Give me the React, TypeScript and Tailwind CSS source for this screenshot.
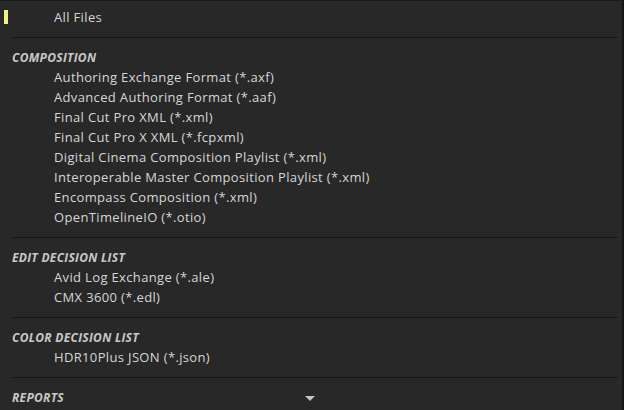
import React from 'react';

const sections = [
  {
    title: 'COMPOSITION',
    items: [
      'Authoring Exchange Format (*.axf)',
      'Advanced Authoring Format (*.aaf)',
      'Final Cut Pro XML (*.xml)',
      'Final Cut Pro X XML (*.fcpxml)',
      'Digital Cinema Composition Playlist (*.xml)',
      'Interoperable Master Composition Playlist (*.xml)',
      'Encompass Composition (*.xml)',
      'OpenTimelineIO (*.otio)',
    ],
  },
  {
    title: 'EDIT DECISION LIST',
    items: ['Avid Log Exchange (*.ale)', 'CMX 3600 (*.edl)'],
  },
  {
    title: 'COLOR DECISION LIST',
    items: ['HDR10Plus JSON (*.json)'],
  },
];

const Divider = () => (
  <div className="h-5 pt-[9px] pl-3 pr-[4px]">
    <div className="h-px w-full bg-[#161616]" />
  </div>
);

const Item = ({ label }: { label: string }) => (
  <div className="h-5 flex items-center pl-[54px] text-[13px] tracking-[0.35px] text-[#d6d6d6] whitespace-nowrap">{label}</div>
);

const Header = ({ title }: { title: string }) => (
  <div className="h-5 flex items-center pl-3 text-[12px] tracking-[0.3px] font-bold italic text-[#c8c8c8] whitespace-nowrap">{title}</div>
);

export default function App() {
  return (
    <div
      className="w-[624px] h-[410px] overflow-hidden bg-[#282828] border-t border-t-[#1a1a1a] border-r-2 border-r-[#151515] pt-[7px]"
      style={{ fontFamily: '"Open Sans", "Noto Sans", sans-serif' }}
    >
      <div className="relative">
        <div className="absolute left-1 top-[2px] w-1 h-[14px] bg-[#f2f282]" />
        <Item label="All Files" />
      </div>
      {sections.map((s) => (
        <div key={s.title}>
          <Divider />
          <Header title={s.title} />
          {s.items.map((i) => (
            <Item key={i} label={i} />
          ))}
        </div>
      ))}
      <Divider />
      <div className="relative">
        <Header title="REPORTS" />
        <svg className="absolute left-[305px] top-[8px]" width="10" height="5" viewBox="0 0 10 5">
          <path d="M0 0H10L5 5Z" fill="#c4c4c4" />
        </svg>
      </div>
    </div>
  );
}
